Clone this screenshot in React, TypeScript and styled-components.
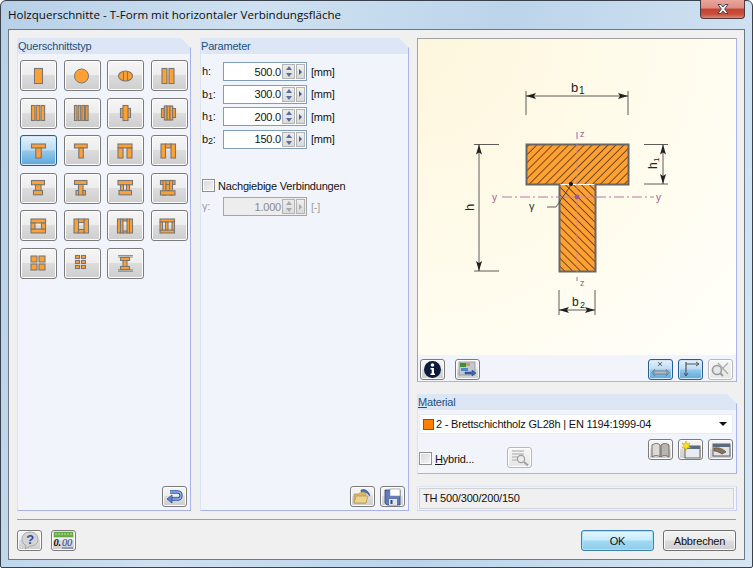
import React from "react";
import styled, { createGlobalStyle, css } from "styled-components";

const GlobalStyle = createGlobalStyle`
  html, body { margin: 0; padding: 0; width: 753px; height: 568px; overflow: hidden; background: #fff; }
  * { box-sizing: border-box; }
`;

const Win = styled.div`
  width: 753px;
  height: 568px;
  display: flex;
  flex-direction: column;
  padding: 0 7px 7px 7px;
  border: 1px solid #39424c;
  border-radius: 6px 6px 2px 2px;
  background: linear-gradient(100deg, #b7d0e8 0%, #cfe1f1 30%, #bcd4ea 60%, #d6e6f4 100%);
  font-family: "Liberation Sans", Arial, sans-serif;
  font-size: 11px;
  letter-spacing: -0.2px;
  color: #111;
`;

const TitleBar = styled.div`
  height: 28px;
  flex: none;
  display: flex;
  align-items: flex-start;
  justify-content: space-between;
`;

const Title = styled.div`
  font-family: "Open Sans", "Liberation Sans", sans-serif;
  font-size: 11.55px;
  letter-spacing: 0;
  line-height: 14px;
  padding-top: 7px;
  color: #0c0c0c;
`;

const CloseBtn = styled.div`
  width: 45px;
  height: 19px;
  margin-top: -1px;
  display: flex;
  align-items: center;
  justify-content: center;
  border: 1px solid #4d3a3a;
  border-top: none;
  border-radius: 0 0 4px 4px;
  background: linear-gradient(#e8a69c 0%, #dd8d82 45%, #c2412f 50%, #c9503c 80%, #d98a7a 100%);
`;

const Client = styled.div`
  flex: 1;
  display: flex;
  flex-direction: column;
  background: #f0f0f0;
  border: 1px solid #6d7883;
  padding: 8px;
`;

const Main = styled.div`
  height: 473px;
  display: grid;
  grid-template-columns: 183px 217px 320px;
`;

const Panel = styled.section<{ $gap?: number }>`
  display: flex;
  flex-direction: column;
  height: 100%;
  margin-right: ${(p) => p.$gap || 0}px;
  background: #f1f5fb;
  border-right: 1px solid #a9b3ea;
  border-bottom: 1px solid #a9b3ea;
  border-left: 1px solid #dbe4f5;
  clip-path: polygon(0 0, calc(100% - 10px) 0, 100% 10px, 100% 100%, 0 100%);
`;

const PanelHead = styled.div`
  height: 16px;
  flex: none;
  line-height: 16px;
  color: #23507f;
  background: #dce6f4;
`;

const PanelFoot = styled.div`
  margin-top: auto;
  display: flex;
  justify-content: flex-end;
  gap: 5px;
  padding: 0 3px 3px 0;
`;

const SectionGrid = styled.div`
  display: grid;
  grid-template-columns: repeat(4, 37px);
  grid-auto-rows: 31px;
  column-gap: 6.5px;
  row-gap: 6.5px;
  padding: 6px 0 0 2px;
`;

const buttonFace = css`
  display: flex;
  align-items: center;
  justify-content: center;
  border: 1px solid #7b7b7b;
  border-radius: 3px;
  box-shadow: inset 0 0 0 1px #fff;
  background: linear-gradient(#f5f5f5 0%, #ededed 48%, #dcdcdc 50%, #cecece 100%);
`;

const activeFace = css`
  border-color: #2b5d8a;
  box-shadow: inset 0 0 0 1px #cfe6f7;
  background: linear-gradient(#e4f1fa 0%, #bcdcf3 48%, #93c8ea 52%, #5ea7dc 100%);
`;

const SectionBtn = styled.div<{ $active?: boolean }>`
  ${buttonFace}
  ${(p) => p.$active && activeFace}
`;

const ToolBtn = styled.div<{ $active?: boolean; $off?: boolean }>`
  ${buttonFace}
  width: 25px;
  height: 21px;
  flex: none;
  ${(p) => p.$active && activeFace}
  ${(p) =>
    p.$off &&
    css`
      border-color: #b8b8b8;
      background: linear-gradient(#f6f6f6, #e6e6e6);
    `}
`;

const Params = styled.div`
  display: flex;
  flex-direction: column;
  padding: 8px 0 0 1px;
`;

const ParamRow = styled.div<{ $off?: boolean }>`
  height: 19px;
  margin-bottom: 3.6px;
  display: grid;
  grid-template-columns: 21px 84px auto;
  align-items: center;
  color: ${(p) => (p.$off ? "#a0a0a0" : "#111")};
`;

const ParamName = styled.span`
  line-height: 19px;
  sub {
    font-size: 9px;
    line-height: 0;
    vertical-align: -1px;
  }
`;

const Unit = styled.span`
  padding-left: 4px;
`;

const SpinBox = styled.div<{ $off?: boolean }>`
  height: 19px;
  display: flex;
  align-items: center;
  justify-content: flex-end;
  padding-right: 1px;
  border: 1px solid ${(p) => (p.$off ? "#a6a6a6" : "#7f9db9")};
  background: ${(p) => (p.$off ? "#ededed" : "#fff")};
  color: ${(p) => (p.$off ? "#8a8a8a" : "#111")};
`;

const SpinValue = styled.span`
  margin-right: 1px;
`;

const SpinPair = styled.div`
  width: 13px;
  height: 15px;
  display: flex;
  flex-direction: column;
  justify-content: space-between;
  border: 1px solid #b4b4b4;
  background: linear-gradient(#ececec, #dcdcdc);
  margin-right: 1px;
`;

const SpinHalf = styled.div<{ $dir: "up" | "down"; $off?: boolean }>`
  width: 0;
  height: 0;
  margin: 1px auto;
  border-left: 3.5px solid transparent;
  border-right: 3.5px solid transparent;
  ${(p) =>
    p.$dir === "up"
      ? `border-bottom: 4px solid ${p.$off ? "#a8a8a8" : "#5a6f9e"};`
      : `border-top: 4px solid ${p.$off ? "#a8a8a8" : "#5a6f9e"};`}
`;

const SpinMore = styled.div`
  width: 9px;
  height: 15px;
  display: flex;
  align-items: center;
  justify-content: center;
  border: 1px solid #b4b4b4;
  background: linear-gradient(#f0f0f0, #d8d8d8);
`;

const SpinMoreArrow = styled.div<{ $off?: boolean }>`
  width: 0;
  height: 0;
  border-top: 3px solid transparent;
  border-bottom: 3px solid transparent;
  border-left: 3px solid ${(p) => (p.$off ? "#a8a8a8" : "#4b5f8e")};
`;

const CheckRow = styled.label`
  display: flex;
  align-items: center;
  gap: 3px;
`;

const CheckBox = styled.span`
  width: 13px;
  height: 13px;
  flex: none;
  border: 1px solid #8e8f8f;
  box-shadow: inset 0 0 0 1px #fff;
  background: linear-gradient(135deg, #d8d8d8, #f4f4f4);
`;

const GapCheck = styled.div`
  margin: 27px 0 5px 0;
`;

const RightCol = styled.div`
  display: flex;
  flex-direction: column;
  height: 100%;
`;

const PreviewPanel = styled.section`
  height: 344px;
  flex: none;
  display: flex;
  flex-direction: column;
  background: #f1f5fb;
  border: 1px solid #a3a3a3;
  border-right-color: #a9b3ea;
  border-bottom-color: #a9b3ea;
`;

const Preview = styled.div`
  height: 316px;
  flex: none;
  background: radial-gradient(ellipse at 0% 0%, #fdf6dd 0%, #fffbea 45%, #fffffb 100%);
  svg {
    display: block;
    letter-spacing: 0;
  }
`;

const PreviewTools = styled.div`
  display: flex;
  align-items: center;
  justify-content: space-between;
  padding: 4px 3px 0 2px;
`;

const ToolGroup = styled.div<{ $gap: number }>`
  display: flex;
  gap: ${(p) => p.$gap}px;
`;

const Spacer = styled.div`
  flex: 1;
`;

const MaterialPanel = styled(Panel)`
  height: 80px;
  flex: none;
  margin-top: 12px;
`;

const Underline = styled.span`
  text-decoration: underline;
`;

const Combo = styled.div`
  height: 20px;
  margin: 4px 3px 0 1px;
  display: flex;
  align-items: center;
  gap: 2px;
  padding: 0 5px 0 3px;
  background: #fff;
  border: 1px solid #e6ebf5;
`;

const Swatch = styled.span`
  width: 11px;
  height: 11px;
  background: #ff8000;
  border: 1px solid #7a5a30;
`;

const ComboText = styled.span`
  flex: 1;
`;

const ComboArrow = styled.span`
  width: 0;
  height: 0;
  border-left: 4px solid transparent;
  border-right: 4px solid transparent;
  border-top: 4px solid #111;
`;

const MaterialTools = styled.div`
  display: flex;
  align-items: flex-start;
  gap: 5px;
  padding: 5px 3px 0 1px;
`;

const HybridCheck = styled(CheckRow)`
  margin-top: 13px;
`;

const SearchSlot = styled.div`
  margin-top: 8px;
  margin-left: 28px;
`;

const NamePanel = styled.section`
  height: 25px;
  flex: none;
  margin-top: 12px;
  padding: 1px 2px 1px 1px;
  background: #f1f5fb;
  border: 1px solid #dbe4f5;
  border-right-color: #c9d0f0;
  border-bottom-color: #c9d0f0;
`;

const NameField = styled.div`
  height: 21px;
  line-height: 19px;
  padding-left: 3px;
  background: #f0f0f0;
  border: 1px solid #d2d2d2;
`;

const Separator = styled.div`
  height: 1px;
  flex: none;
  margin-top: 8px;
  background: #a0a0a0;
`;

const Footer = styled.div`
  flex: 1;
  display: flex;
  align-items: flex-start;
  gap: 9px;
  padding-top: 10px;
`;

const FooterBtn = styled.div<{ $primary?: boolean }>`
  width: 73px;
  height: 21px;
  display: flex;
  align-items: center;
  justify-content: center;
  border-radius: 3px;
  border: 1px solid ${(p) => (p.$primary ? "#3c7fb1" : "#707070")};
  box-shadow: inset 0 0 0 1px ${(p) => (p.$primary ? "#a4e4fb" : "#fbfbfb")};
  background: ${(p) =>
    p.$primary
      ? "linear-gradient(#e5f6fd 0%, #c5ecfb 48%, #a2d9f3 52%, #8fcdec 100%)"
      : "linear-gradient(#f3f3f3 0%, #ebebeb 48%, #dddddd 52%, #cfcfcf 100%)"};
`;

const stroke = "#777";
const orange = "#ffa033";

type Shape = number[];
const sections: { rects: Shape[]; kind?: "circle" | "oval" | "lined" }[] = [
  { rects: [[7.5, 4.5, 8, 15]] },
  { rects: [], kind: "circle" },
  { rects: [], kind: "oval" },
  { rects: [[5, 4.5, 5, 15], [12, 4.5, 5, 15]] },
  { rects: [[4.5, 4.5, 3.5, 15], [9.3, 4.5, 3.5, 15], [14.1, 4.5, 3.5, 15]] },
  { rects: [[4.5, 4.5, 2.5, 15], [8.2, 4.5, 2.5, 15], [11.9, 4.5, 2.5, 15], [15.6, 4.5, 2.5, 15]] },
  { rects: [[6.5, 7.5, 10, 9], [9, 4.5, 5, 15]] },
  { rects: [[4.5, 7.5, 2.8, 9], [7.3, 5, 2.8, 14], [10.1, 5, 2.8, 14], [12.9, 5, 2.8, 14], [15.7, 7.5, 2.8, 9]] },
  { rects: [[4.5, 5, 14, 4], [8.8, 9, 5.5, 10]] },
  { rects: [[4.5, 5, 12.7, 4], [8.8, 9, 4.5, 10]] },
  { rects: [[4, 5, 14, 4], [4, 9, 5, 10], [13, 9, 5, 10]] },
  { rects: [[4, 5, 4.5, 14], [8.5, 5, 5.5, 4], [14, 5, 4.5, 14]] },
  { rects: [[4.5, 4.5, 13, 4.3], [8.5, 8.8, 5.5, 5.7], [6.5, 14.5, 9, 4.3]] },
  { rects: [[4.5, 4.5, 12.5, 4], [8.5, 8.5, 4.5, 10.5], [6, 14.5, 2.5, 4.5], [13, 14.5, 2.5, 4.5]] },
  { rects: [[4, 4.5, 14.5, 4.3], [6.5, 8.8, 3, 5.7], [12.5, 8.8, 3, 5.7], [5, 14.5, 12.5, 4.3]] },
  { rects: [[3.5, 4.5, 14.5, 4], [6, 4.5, 3, 14.5], [12.5, 4.5, 3, 14.5], [9, 8.5, 3.5, 6], [3.5, 14.8, 14.5, 4.2]] },
  { rects: [[4, 5, 14.5, 4], [4, 15, 14.5, 4], [4, 9, 4, 6], [14.5, 9, 4, 6]] },
  { rects: [[4, 5, 4.5, 14], [14, 5, 4.5, 14], [8.5, 5, 5.5, 3.5], [8.5, 15.5, 5.5, 3.5]] },
  { rects: [[3.5, 5, 3, 14], [6.5, 5, 2.5, 14], [13, 5, 2.5, 14], [15.5, 5, 3, 14], [9, 5, 4, 2], [9, 17, 4, 2]] },
  { rects: [[3, 5, 14.5, 3], [3, 16, 14.5, 3], [3, 8, 2.5, 8], [8.5, 8, 2.5, 8], [15, 8, 2.5, 8]] },
  { rects: [[4, 5, 6, 6], [12, 5, 6, 6], [4, 13, 6, 6], [12, 13, 6, 6]] },
  { rects: [[5.5, 4.5, 4, 3], [11.5, 4.5, 4, 3], [5.5, 9.5, 4, 3], [11.5, 9.5, 4, 3], [5.5, 14.5, 4, 3], [11.5, 14.5, 4, 3]] },
  { rects: [[6.5, 6.5, 9, 3], [9, 9.5, 4, 6], [6.5, 15.5, 9, 3]], kind: "lined" },
];

function SectionIcon({ index }: { index: number }) {
  const s = sections[index];
  return (
    <svg width="24" height="24" viewBox="0 0 24 24">
      {s.kind === "circle" && <circle cx="11.5" cy="12" r="7" fill={orange} stroke={stroke} strokeWidth="1" />}
      {s.kind === "oval" && (
        <>
          <ellipse cx="11.5" cy="12" rx="7" ry="5" fill={orange} stroke={stroke} strokeWidth="1.1" />
          <path d="M9.5 7.3V16.7M13.5 7.3V16.7" stroke={stroke} strokeWidth="1.1" fill="none" />
        </>
      )}
      {s.kind === "lined" && (
        <path d="M4 4.5H19M4 6H19M4 18.8H19M4 20.3H19" stroke={stroke} strokeWidth="0.8" fill="none" />
      )}
      {s.rects.map((r, i) => (
        <rect key={i} x={r[0]} y={r[1]} width={r[2]} height={r[3]} fill={orange} stroke={stroke} strokeWidth="1.1" />
      ))}
    </svg>
  );
}

const CloseGlyph = () => (
  <svg width="16" height="12" viewBox="0 0 16 12">
    <path d="M3 1.5H6L8 4L10 1.5H13L9.7 6L13 10.5H10L8 8L6 10.5H3L6.3 6Z" fill="#f2f2f2" stroke="#444a55" strokeWidth="1" />
  </svg>
);

const ReturnIcon = () => (
  <svg width="19" height="15" viewBox="0 0 19 15">
    <path d="M5 3H13C17 3 17 10 13 10H6" fill="none" stroke="#2b4f9c" strokeWidth="3.4" />
    <path d="M5 3H13C17 3 17 10 13 10H6" fill="none" stroke="#8fb4ea" strokeWidth="1.4" />
    <path d="M7 6L2 10L7 14Z" fill="#5c86d6" stroke="#2b4f9c" strokeWidth="0.8" />
  </svg>
);

const OpenIcon = () => (
  <svg width="21" height="18" viewBox="0 0 21 18">
    <path d="M2 6H7L8.5 4H14V15H2Z" fill="#d8b868" stroke="#b09a60" strokeWidth="0.8" />
    <path d="M2 15L4 8H16L14 15Z" fill="#ecd48c" stroke="#b09a60" strokeWidth="0.8" />
    <path d="M9 2C13 0.5 17 3 18 8L16.5 7C15.5 4.5 12.5 3 9 3.5Z" fill="#4d74b8" stroke="#33508c" strokeWidth="0.6" />
  </svg>
);

const SaveIcon = () => (
  <svg width="18" height="18" viewBox="0 0 18 18">
    <path d="M1 2H16V17H3L1 15Z" fill="#5f7cb8" stroke="#2d4584" strokeWidth="0.8" />
    <rect x="6" y="1" width="10" height="7" fill="#fff" stroke="#7d8cb0" strokeWidth="0.6" />
    <rect x="5" y="11" width="8" height="6" fill="#e0e3ec" />
    <rect x="6.5" y="12" width="2" height="4" fill="#2d4584" />
  </svg>
);

const InfoIcon = () => (
  <svg width="19" height="19" viewBox="0 0 19 19">
    <circle cx="9.5" cy="9.5" r="8.5" fill="#0c1a3c" />
    <circle cx="9.5" cy="5" r="1.8" fill="#fff" />
    <path d="M7.5 8H11V13.5H12V15H7.5V13.5H8.7V9.5H7.5Z" fill="#fff" />
  </svg>
);

const ColorsIcon = () => (
  <svg width="19" height="17" viewBox="0 0 19 17">
    <rect x="1" y="1" width="16" height="13" fill="#c4c8d0" stroke="#7c7c7c" strokeWidth="0.6" />
    <rect x="2" y="2" width="6" height="4" fill="#3f8f3c" />
    <rect x="8" y="2" width="4" height="3" fill="#d8a030" />
    <rect x="3" y="7" width="7" height="3" fill="#4a8ac8" />
    <path d="M7 11H14V9L18 12L14 15V13H7Z" fill="#3a62b8" stroke="#23407c" strokeWidth="0.5" />
  </svg>
);

const BeamIcon = () => (
  <svg width="21" height="17" viewBox="0 0 21 17">
    <path d="M8 1L12 5M12 1L8 5" stroke="#555" strokeWidth="0.9" />
    <path d="M4 10H17V13H4Z" fill="#b8bcc2" stroke="#6a6a6a" strokeWidth="0.7" />
    <path d="M5 8L2 11.5L5 15M16 8L19 11.5L16 15" stroke="#6a6a6a" strokeWidth="0.8" fill="none" />
  </svg>
);

const AxesIcon = () => (
  <svg width="21" height="17" viewBox="0 0 21 17">
    <path d="M6 3H19M6 1V15" stroke="#555" strokeWidth="1.2" fill="none" />
    <path d="M16 1L19 3L16 5M4 12L6 15L8 12" stroke="#555" strokeWidth="1" fill="none" />
  </svg>
);

const ZoomOffIcon = () => (
  <svg width="21" height="17" viewBox="0 0 21 17">
    <circle cx="7" cy="9" r="4.5" fill="#e4e8ec" stroke="#9a9a9a" strokeWidth="1.6" />
    <path d="M10 12L13 15" stroke="#9a9a9a" strokeWidth="2" />
    <path d="M8 2L18 13M18 2L11 9" stroke="#b0b0b0" strokeWidth="1.4" />
  </svg>
);

const BookIcon = () => (
  <svg width="21" height="16" viewBox="0 0 21 16">
    <path d="M2 3C5 1 8 1 10 3V15C8 13 5 13 2 15Z" fill="#dcdad4" stroke="#66605a" strokeWidth="0.9" />
    <path d="M11 3C13 1 16 1 19 3V15C16 13 13 13 11 15Z" fill="#b8b5ae" stroke="#66605a" strokeWidth="0.9" />
  </svg>
);

const NewIcon = () => (
  <svg width="20" height="18" viewBox="0 0 20 18">
    <rect x="4" y="5" width="15" height="12" fill="#e8ecf0" stroke="#555" strokeWidth="0.9" />
    <rect x="4" y="5" width="15" height="3" fill="#5a6a80" />
    <path d="M5 0L6.2 3L9 2L7.5 4.8L9.5 7L6.5 6.8L5 9.5L3.8 6.8L1 7L2.8 4.8L1 2L3.8 3Z" fill="#f8e020" stroke="#b8a010" strokeWidth="0.5" />
  </svg>
);

const EditIcon = () => (
  <svg width="20" height="17" viewBox="0 0 20 17">
    <rect x="2" y="3" width="17" height="12" fill="#dfe3ea" stroke="#555" strokeWidth="0.9" />
    <rect x="2" y="3" width="17" height="3" fill="#5a6a80" />
    <path d="M3 7C8 6 12 8 15 11L11 13C8 11 5 10 3 10Z" fill="#8a7458" stroke="#4c3a28" strokeWidth="0.6" />
  </svg>
);

const SearchListIcon = () => (
  <svg width="20" height="18" viewBox="0 0 20 18">
    <path d="M2 2H14M2 5H14M2 8H8M2 11H7" stroke="#a8a8a8" strokeWidth="1.2" />
    <circle cx="11" cy="10" r="3.6" fill="#e8ecef" stroke="#9c9c9c" strokeWidth="1.2" />
    <path d="M14 13L18 16.5" stroke="#a0a0a0" strokeWidth="2" />
  </svg>
);

const HelpIcon = () => (
  <svg width="20" height="19" viewBox="0 0 20 19">
    <path d="M10 1C15 1 18 4 18 8.5C18 13 14 15 10 15L5 18L6 14.5C3 13 2 11 2 8.5C2 4 5 1 10 1Z" fill="#d4d4d4" stroke="#9a9a9a" strokeWidth="0.8" />
    <text x="10" y="13" textAnchor="middle" fontFamily="Liberation Sans" fontSize="13" fontWeight="bold" fill="#2a4f9c">?</text>
  </svg>
);

const UnitsIcon = () => (
  <svg width="21" height="19" viewBox="0 0 21 19">
    <rect x="1" y="1" width="19" height="5" fill="#6fb04a" stroke="#4c8030" strokeWidth="0.4" />
    <path d="M3 2V4M6 2V4M9 2V4M12 2V4M15 2V4M18 2V4" stroke="#d8efc8" strokeWidth="0.7" />
    <text x="0.5" y="15" fontFamily="Liberation Serif" fontStyle="italic" fontWeight="bold" fontSize="10.5" fill="#111">0.</text>
    <text x="9" y="15" fontFamily="Liberation Serif" fontStyle="italic" fontSize="10.5" fill="#2a3f9c">00</text>
    <path d="M9 17H20" stroke="#2a3f9c" strokeWidth="0.8" />
  </svg>
);

const purple = "#9c5a8e";

// the drawing keeps page coordinates, so the numbers read straight off the screenshot
function CrossSection() {
  return (
    <svg width="318" height="316" viewBox="418 39 318 316" fontFamily="Liberation Sans, sans-serif">
      <defs>
        <pattern id="hatchA" width="5.6" height="5.6" patternUnits="userSpaceOnUse" patternTransform="rotate(45)">
          <rect width="5.6" height="5.6" fill={orange} />
          <path d="M0 0V5.6" stroke="#000" strokeWidth="1.1" />
        </pattern>
        <pattern id="hatchB" width="5.6" height="5.6" patternUnits="userSpaceOnUse" patternTransform="rotate(-45)">
          <rect width="5.6" height="5.6" fill={orange} />
          <path d="M0 0V5.6" stroke="#000" strokeWidth="1.1" />
        </pattern>
        <marker id="tip" viewBox="0 0 10 6" refX="10" refY="3" markerWidth="10" markerHeight="6" orient="auto-start-reverse" markerUnits="userSpaceOnUse">
          <path d="M0 0L10 3L0 6L2 3Z" fill="#222" />
        </marker>
      </defs>

      <rect x="560" y="185" width="35" height="86" fill="url(#hatchB)" />
      <rect x="527" y="145" width="101" height="39" fill="url(#hatchA)" />
      <path d="M526.5 144.5H628.5V184.5H595.5V271.5H559.5V184.5H526.5Z" fill="none" stroke="#666" strokeWidth="2" />

      <path d="M577 144V272" stroke="#c98aa8" strokeWidth="0.8" strokeDasharray="10 3 2 3" />
      <path d="M502 197H559M596 197H654" stroke={purple} strokeWidth="0.8" strokeDasharray="10 3 2 3" fill="none" />
      <path d="M559 197H596" stroke="#c98aa8" strokeWidth="0.8" />
      <circle cx="577" cy="197" r="2.4" fill={purple} />
      <path d="M577 132V139M577 277V281" stroke={purple} strokeWidth="0.9" />
      <text x="580" y="137" fontSize="9" fill={purple}>z</text>
      <text x="580" y="286" fontSize="9" fill={purple}>z</text>
      <text x="492" y="201" fontSize="10" fill={purple}>y</text>
      <text x="656" y="201" fontSize="10" fill={purple}>y</text>

      <circle cx="571" cy="184" r="2" fill="#111" />
      <path d="M547 207H556L571 185" stroke="#333" strokeWidth="0.8" fill="none" />
      <text x="529" y="210" fontSize="11" fill="#333">γ</text>

      <g stroke="#333" strokeWidth="0.8" fill="none">
        <path d="M526 91V115M628 91V115" />
        <path d="M526 96H628" markerStart="url(#tip)" markerEnd="url(#tip)" />
        <path d="M474 144.5H499M474 271H499" />
        <path d="M479 144.5V271" markerStart="url(#tip)" markerEnd="url(#tip)" />
        <path d="M644 144.5H668M644 184H668" />
        <path d="M663 144.5V184" markerStart="url(#tip)" markerEnd="url(#tip)" />
        <path d="M559 290V315M595 290V315" />
        <path d="M559 310H595" markerStart="url(#tip)" markerEnd="url(#tip)" />
      </g>

      <text x="571" y="92" fontSize="13" fill="#222">b</text>
      <text x="579" y="94" fontSize="10" fill="#222">1</text>
      <text x="572" y="306" fontSize="12" fill="#222">b</text>
      <text x="580" y="308" fontSize="9" fill="#222">2</text>
      <text transform="translate(474 211) rotate(-90)" fontSize="13" fill="#222">h</text>
      <text transform="translate(657 169) rotate(-90)" fontSize="12" fill="#222">h</text>
      <text transform="translate(659 162) rotate(-90)" fontSize="8" fill="#222">1</text>
    </svg>
  );
}

const params: { name: string; sub?: string; value: string }[] = [
  { name: "h", value: "500.0" },
  { name: "b", sub: "1", value: "300.0" },
  { name: "h", sub: "1", value: "200.0" },
  { name: "b", sub: "2", value: "150.0" },
];

function Spinner({ value, off }: { value: string; off?: boolean }) {
  return (
    <SpinBox $off={off}>
      <SpinValue>{value}</SpinValue>
      <SpinPair>
        <SpinHalf $dir="up" $off={off} />
        <SpinHalf $dir="down" $off={off} />
      </SpinPair>
      <SpinMore>
        <SpinMoreArrow $off={off} />
      </SpinMore>
    </SpinBox>
  );
}

export default function App() {
  return (
    <>
      <GlobalStyle />
      <Win>
        <TitleBar>
          <Title>Holzquerschnitte - T-Form mit horizontaler Verbindungsfläche</Title>
          <CloseBtn>
            <CloseGlyph />
          </CloseBtn>
        </TitleBar>
        <Client>
          <Main>
            <Panel $gap={9}>
              <PanelHead>Querschnittstyp</PanelHead>
              <SectionGrid>
                {sections.map((_, i) => (
                  <SectionBtn key={i} $active={i === 8}>
                    <SectionIcon index={i} />
                  </SectionBtn>
                ))}
              </SectionGrid>
              <PanelFoot>
                <ToolBtn>
                  <ReturnIcon />
                </ToolBtn>
              </PanelFoot>
            </Panel>

            <Panel $gap={8}>
              <PanelHead>Parameter</PanelHead>
              <Params>
                {params.map((p) => (
                  <ParamRow key={p.name + (p.sub || "")}>
                    <ParamName>
                      {p.name}
                      {p.sub && <sub>{p.sub}</sub>}:
                    </ParamName>
                    <Spinner value={p.value} />
                    <Unit>[mm]</Unit>
                  </ParamRow>
                ))}
                <GapCheck>
                  <CheckRow>
                    <CheckBox />
                    Nachgiebige Verbindungen
                  </CheckRow>
                </GapCheck>
                <ParamRow $off>
                  <ParamName>γ:</ParamName>
                  <Spinner value="1.000" off />
                  <Unit>[-]</Unit>
                </ParamRow>
              </Params>
              <PanelFoot>
                <ToolBtn>
                  <OpenIcon />
                </ToolBtn>
                <ToolBtn>
                  <SaveIcon />
                </ToolBtn>
              </PanelFoot>
            </Panel>

            <RightCol>
              <PreviewPanel>
                <Preview>
                  <CrossSection />
                </Preview>
                <PreviewTools>
                  <ToolGroup $gap={10}>
                    <ToolBtn>
                      <InfoIcon />
                    </ToolBtn>
                    <ToolBtn>
                      <ColorsIcon />
                    </ToolBtn>
                  </ToolGroup>
                  <ToolGroup $gap={5}>
                    <ToolBtn $active>
                      <BeamIcon />
                    </ToolBtn>
                    <ToolBtn $active>
                      <AxesIcon />
                    </ToolBtn>
                    <ToolBtn $off>
                      <ZoomOffIcon />
                    </ToolBtn>
                  </ToolGroup>
                </PreviewTools>
              </PreviewPanel>

              <MaterialPanel>
                <PanelHead>
                  <Underline>M</Underline>aterial
                </PanelHead>
                <Combo>
                  <Swatch />
                  <ComboText>2 - Brettschichtholz GL28h | EN 1194:1999-04</ComboText>
                  <ComboArrow />
                </Combo>
                <MaterialTools>
                  <HybridCheck>
                    <CheckBox />
                    <span>
                      <Underline>H</Underline>ybrid...
                    </span>
                  </HybridCheck>
                  <SearchSlot>
                    <ToolBtn $off>
                      <SearchListIcon />
                    </ToolBtn>
                  </SearchSlot>
                  <Spacer />
                  <ToolBtn>
                    <BookIcon />
                  </ToolBtn>
                  <ToolBtn>
                    <NewIcon />
                  </ToolBtn>
                  <ToolBtn>
                    <EditIcon />
                  </ToolBtn>
                </MaterialTools>
              </MaterialPanel>

              <NamePanel>
                <NameField>TH 500/300/200/150</NameField>
              </NamePanel>
            </RightCol>
          </Main>

          <Separator />

          <Footer>
            <ToolBtn>
              <HelpIcon />
            </ToolBtn>
            <ToolBtn>
              <UnitsIcon />
            </ToolBtn>
            <Spacer />
            <FooterBtn $primary>OK</FooterBtn>
            <FooterBtn>Abbrechen</FooterBtn>
          </Footer>
        </Client>
      </Win>
    </>
  );
}
